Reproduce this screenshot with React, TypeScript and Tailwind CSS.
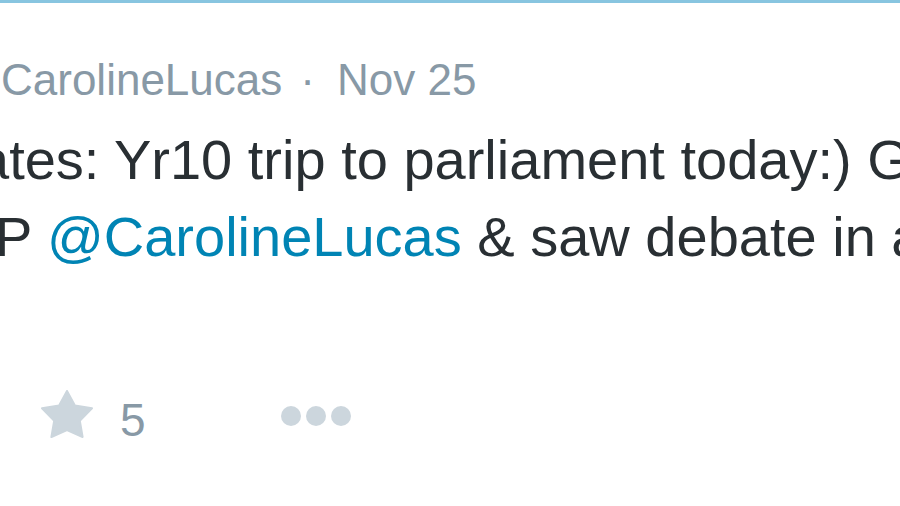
import React from "react";

export default function App() {
  /* ----- tweetin tiedot ----- */
  const tweet = {
    kayttaja: "CarolineLucas",
    pvm: "Nov 25",
    suosikit: 5,
  };

  return (
    // pääkontti (rajattu tweet-kortti)
    <div
      className="w-[900px] h-[506px] bg-white overflow-hidden border-t-[3px] border-[#88c5e0]"
      style={{ fontFamily: '"Liberation Sans", Arial, sans-serif' }}
    >
      {/* otsikkorivi: käyttäjä + päiväys */}
      <div className="mt-[51px] ml-[1px] flex items-baseline whitespace-nowrap text-[44px] leading-[52px] text-[#8899a6]">
        <span>{tweet.kayttaja}</span>
        <span className="ml-[18px]">·</span>
        <span className="ml-[22px]">{tweet.pvm}</span>
      </div>

      {/* tweetin teksti */}
      <div className="mt-[15px] text-[56px] leading-[77px] text-[#292f33] whitespace-nowrap">
        <div className="ml-[-22px]">ates: Yr10 trip to parliament today:) Got to meet</div>
        <div className="ml-[-5px]">
          P <span className="text-[#0084b4]">@CarolineLucas</span> &amp; saw debate in action
        </div>
      </div>

      {/* toiminnot: suosikki + lisää */}
      <div className="mt-[115px] flex items-start">
        <svg
          className="ml-[41px]"
          width="52"
          height="48"
          viewBox="0 0 52 48"
        >
          <polygon
            points="26,1 33.9,15.6 51,18.3 38.8,30.7 41.6,47 26,40 10.4,47 13.2,30.7 1,18.3 18.1,15.6"
            fill="#ccd6dd"
            stroke="#ccd6dd"
            strokeWidth="2"
            strokeLinejoin="round"
          />
        </svg>
        <span className="ml-[27px] mt-[7px] text-[46px] leading-none text-[#8899a6]">
          {tweet.suosikit}
        </span>
        <div className="ml-[135px] mt-[16px] flex gap-[5px]">
          <span className="w-5 h-5 rounded-full bg-[#ccd6dd]" />
          <span className="w-5 h-5 rounded-full bg-[#ccd6dd]" />
          <span className="w-5 h-5 rounded-full bg-[#ccd6dd]" />
        </div>
      </div>
    </div>
  );
}
